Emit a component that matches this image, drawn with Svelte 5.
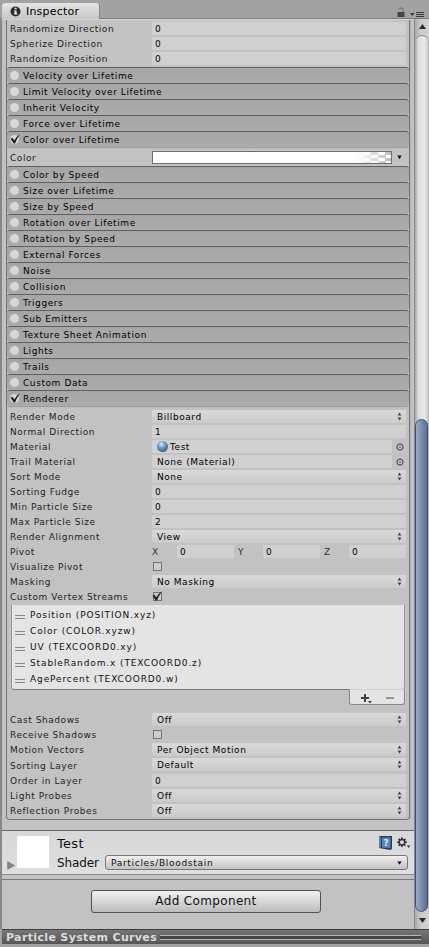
<script>
  const top = ['Randomize Direction', 'Spherize Direction', 'Randomize Position'];
  const modulesA = ['Velocity over Lifetime', 'Limit Velocity over Lifetime', 'Inherit Velocity', 'Force over Lifetime'];
  const modulesB = [
    'Color by Speed', 'Size over Lifetime', 'Size by Speed', 'Rotation over Lifetime', 'Rotation by Speed',
    'External Forces', 'Noise', 'Collision', 'Triggers', 'Sub Emitters', 'Texture Sheet Animation',
    'Lights', 'Trails', 'Custom Data'
  ];
  const renderer = [
    { label: 'Render Mode', kind: 'popup', value: 'Billboard' },
    { label: 'Normal Direction', kind: 'num', value: '1' },
    { label: 'Material', kind: 'object', value: 'Test', ball: true },
    { label: 'Trail Material', kind: 'object', value: 'None (Material)' },
    { label: 'Sort Mode', kind: 'popup', value: 'None' },
    { label: 'Sorting Fudge', kind: 'num', value: '0' },
    { label: 'Min Particle Size', kind: 'num', value: '0' },
    { label: 'Max Particle Size', kind: 'num', value: '2' },
    { label: 'Render Alignment', kind: 'popup', value: 'View' },
    { label: 'Pivot', kind: 'vec', value: ['X', 'Y', 'Z'] },
    { label: 'Visualize Pivot', kind: 'check', value: false },
    { label: 'Masking', kind: 'popup', value: 'No Masking' },
    { label: 'Custom Vertex Streams', kind: 'check', value: true }
  ];
  const streams = [
    'Position (POSITION.xyz)', 'Color (COLOR.xyzw)', 'UV (TEXCOORD0.xy)',
    'StableRandom.x (TEXCOORD0.z)', 'AgePercent (TEXCOORD0.w)'
  ];
  const lighting = [
    { label: 'Cast Shadows', kind: 'popup', value: 'Off' },
    { label: 'Receive Shadows', kind: 'check', value: false },
    { label: 'Motion Vectors', kind: 'popup', value: 'Per Object Motion' },
    { label: 'Sorting Layer', kind: 'popup', value: 'Default', extra: true },
    { label: 'Order in Layer', kind: 'num', value: '0' },
    { label: 'Light Probes', kind: 'popup', value: 'Off' },
    { label: 'Reflection Probes', kind: 'popup', value: 'Off' }
  ];
</script>

{#snippet tick()}
  <svg class="tick" width="12" height="12" viewBox="0 0 12 12"><path d="M.6 5.8 L2.5 4.8 L4.3 7.6 Q6.5 3.5 10.2 1.1 Q7 5.5 5 10.5 L3.8 10.5 Z" fill="#1c1c1c" /></svg>
{/snippet}

{#snippet module(name, on)}
  <div class="module" class:on>
    <span class="dot">{#if on}{@render tick()}{/if}</span>
    <span class="mname">{name}</span>
  </div>
{/snippet}

{#snippet row(r)}
  <div class="row" class:extra={r.extra}>
    <span class="label">{r.label}</span>
    {#if r.kind === 'popup'}
      <div class="field popup">
        <span>{r.value}</span>
        <svg width="5" height="9" viewBox="0 0 5 9"><path d="M2.5 .6 L4.4 3.6 H.6Z M2.5 8.4 L4.4 5.4 H.6Z" fill="#424242" /></svg>
      </div>
    {:else if r.kind === 'num'}
      <div class="field"><span>{r.value}</span></div>
    {:else if r.kind === 'object'}
      <div class="field object">
        {#if r.ball}<i class="ball"></i>{/if}
        <span>{r.value}</span>
      </div>
      <svg class="picker" width="8" height="8" viewBox="0 0 8 8"><circle cx="4" cy="4" r="3.1" fill="none" stroke="#3d3d3d" /><circle cx="4" cy="4" r=".7" fill="#222" /></svg>
    {:else if r.kind === 'vec'}
      <div class="vec">
        {#each r.value as axis}
          <span class="axis">{axis}</span>
          <div class="field"><span>0</span></div>
        {/each}
      </div>
    {:else}
      <span class="box">{#if r.value}{@render tick()}{/if}</span>
    {/if}
  </div>
{/snippet}

<div class="window">
  <header class="tabs">
    <div class="tab">
      <svg width="11" height="11" viewBox="0 0 11 11"><circle cx="5.5" cy="5.5" r="5" fill="#2c2c2c" /><path d="M4.6 1.8h2v1.5h-2z M4 4.4h2.6v3.2h.8v1H3.8v-1h.8V5.4H4z" fill="#eee" /></svg>
      <span>Inspector</span>
    </div>
    <svg class="lock" width="8" height="10" viewBox="0 0 8 10"><path d="M.5 5h7V10h-7z" fill="#444" /><path d="M2 2.4Q2.5 1 4 1Q6 1 6 3.2V5" fill="none" stroke="#666" /></svg>
    <svg class="menu" width="14" height="5" viewBox="0 0 14 5"><path d="M0 1h4.6L2.3 4z M6 0h8v1H6z M6 2h8v1H6z M6 4h8v1H6z" fill="#3b3b3b" /></svg>
  </header>

  <div class="main">
    <div class="content">
      <section class="panel">
        <div class="body first">
          {#each top as t}{@render row({ label: t, kind: 'num', value: '0' })}{/each}
        </div>
        {#each modulesA as m}{@render module(m, false)}{/each}
        {@render module('Color over Lifetime', true)}
        <div class="body color">
          <span class="label">Color</span>
          <div class="gradient"><i></i></div>
          <svg width="5" height="5" viewBox="0 0 5 5"><path d="M.3 .5h4.4L2.5 4.3z" fill="#111" /></svg>
        </div>
        {#each modulesB as m}{@render module(m, false)}{/each}
        {@render module('Renderer', true)}
        <div class="body render">
          {#each renderer as r}{@render row(r)}{/each}
          <div class="list">
            {#each streams as s}
              <div class="item"><i></i><span>{s}</span></div>
            {/each}
          </div>
          <div class="listfoot">
            <svg width="54" height="14" viewBox="0 0 54 14"><path d="M11 7h8v2h-8z M14 4h2v8h-2z M18 11h4l-2 2.4z" fill="#404040" /><path d="M36 7h8v2h-8z" fill="#999" /></svg>
          </div>
          {#each lighting as r}{@render row(r)}{/each}
        </div>
      </section>

      <section class="material">
        <svg class="fold" width="9" height="9" viewBox="0 0 9 9"><path d="M.2 0L8.2 4.5L.2 9z" fill="#858585" /></svg>
        <div class="preview"></div>
        <div class="minfo">
          <div class="mtop">
            <span class="big">Test</span>
            <svg class="help" width="13" height="14" viewBox="0 0 13 14"><path d="M0 .5L2 0H13V13L11 14L0 12z" fill="#213d61" /><path d="M3 1.5H11.5V12L3 11.5z" fill="#5e86b4" /><path d="M1 1v10.7" stroke="#a9bdd3" /><text x="7.3" y="9.8" text-anchor="middle" font-size="8" font-weight="bold" fill="#e8f0fa">?</text></svg>
            <svg class="gear" width="14" height="12" viewBox="0 0 14 12"><g stroke="#333" fill="none"><circle cx="5" cy="5.2" r="2.8" stroke-width="1.5" /><path stroke-width="1.7" d="M5 .4v2M5 8v2M.2 5.2h2M7.8 5.2h2M1.6 1.8l1.4 1.4M7 7.2l1.4 1.4M1.6 8.6l1.4-1.4M7 3.2l1.4-1.4" /></g><path d="M9.8 8.5h3.6L11.6 11z" fill="#333" /></svg>
          </div>
          <div class="mbot">
            <span class="shader">Shader</span>
            <div class="select"><span>Particles/Bloodstain</span><svg width="5" height="4" viewBox="0 0 5 4"><path d="M.3 .4h4.4L2.5 3.8z" fill="#111" /></svg></div>
          </div>
        </div>
      </section>
      <div class="adder"><button>Add Component</button></div>
    </div>

    <aside class="scroll">
      <svg width="7" height="5" viewBox="0 0 7 5"><path d="M0 5h7L3.5 0z" fill="#2c2c2c" /></svg>
      <div class="track"><div class="thumb"></div></div>
      <svg class="down" width="7" height="5" viewBox="0 0 7 5"><path d="M0 0h7L3.5 5z" fill="#2c2c2c" /></svg>
    </aside>
  </div>

  <footer class="curves"><span>Particle System Curves</span><i></i></footer>
</div>

<style>
  * { box-sizing: border-box; }
  .window { width: 429px; height: 947px; display: flex; flex-direction: column; background: #a2a2a2; font-family: "DejaVu Sans", sans-serif; font-size: 9px; letter-spacing: .56px; color: #000; overflow: hidden; white-space: nowrap; }
  .tabs { height: 19px; flex: none; display: flex; align-items: flex-end; border-bottom: 1px solid #7d7d7d; padding-left: 2px; background: #a2a2a2; }
  .tab { height: 16px; width: 98px; margin-bottom: -1px; display: flex; align-items: center; padding-left: 8px; gap: 5px; font-size: 11px; letter-spacing: .2px; background: linear-gradient(#e4e4e4, #c6c6c6); border-radius: 3px 3px 0 0; border-right: 1px solid #848484; }
  .lock { margin: 0 0 1px auto; }
  .menu { margin: 0 5px 1px 5px; }
  .main { height: 910px; flex: none; display: flex; padding-left: 2px; background: #c2c2c2; box-shadow: inset 2px 0 #888; }
  .content { width: 412px; border-top: 1px solid #d4d4d4; }
  .panel { width: 404px; margin-left: 4px; height: 800px; border: 1px solid #747474; border-top: 0; border-radius: 0 0 4px 4px; box-shadow: 1px 0 #b3b3b3; }
  .body { padding-left: 3px; }
  .first { height: 47px; padding-top: 1px; }
  .row { height: 15px; display: flex; align-items: center; padding-right: 3px; }
  .label { width: 142px; flex: none; color: #222; line-height: 14px; padding-top: 1px; }
  .field { flex: 1; height: 13px; background: #d0d0d0; display: flex; align-items: center; padding-left: 3px; border-radius: 1px; }
  .field span { line-height: 12px; padding-top: 1px; }
  .popup { background: linear-gradient(#d9d9d9, #cbcbcb); padding: 0 4px 0 5px; justify-content: space-between; }
  .object { padding-left: 5px; }
  .ball { width: 11px; height: 11px; border-radius: 50%; margin-right: 2px; background: radial-gradient(circle at 40% 30%, #dceaf5 0, #7fa6c9 30%, #426f9b 65%, #2c537b 100%); }
  .picker { margin: 0 2px 0 4px; }
  .vec { flex: 1; display: flex; align-items: center; }
  .axis { width: 25px; color: #333; line-height: 12px; padding-top: 1px; }
  .vec .field { flex: none; width: 57px; margin-right: 4px; }
  .vec .field:last-child { margin-right: 0; }
  .box { width: 9px; height: 9px; margin-left: 1px; border: 1px solid #747474; background: #cbcbcb; position: relative; }
  .box .tick { position: absolute; left: -2px; top: -3px; }
  .module { height: 16px; border-top: 1px solid #5f5f5f; background: linear-gradient(#a6a6a6, #ababab); border-radius: 3px; display: flex; align-items: center; padding-left: 3px; letter-spacing: .58px; }
  .module.on { box-shadow: 0 1px 1px #999; }
  .dot { width: 9px; height: 9px; border-radius: 50%; background: #d8d8d8; position: relative; margin-right: 4px; }
  .dot .tick { position: absolute; left: 0; top: -2px; }
  .mname { line-height: 14px; padding-top: 1px; }
  .color { height: 19px; display: flex; align-items: center; padding-top: 1px; }
  .gradient { width: 240px; height: 13px; border: 1px solid #6c6c6c; padding: 0; background: repeating-conic-gradient(#b8b8b8 0 25%, #fff 0 50%) 0 0 / 15px 6px; margin-right: 5px; }
  .gradient i { display: block; height: 11px; background: linear-gradient(90deg, #fff 86%, rgba(255,255,255,.05) 100%); }
  .render { padding-top: 3px; }
  .list { height: 85px; width: 394px; margin: 1px 0 0 1px; background: #e4e4e4; border: solid #999; border-width: 0 1px 1px; border-bottom-color: #777; border-radius: 0 0 3px 3px; padding-top: 2px; }
  .item { height: 16px; display: flex; align-items: center; color: #111; padding-left: 3px; letter-spacing: .88px; }
  .item i { width: 10px; height: 4px; border: solid #888; border-width: 1px 0; margin: 4px 5px 0 0; }
  .listfoot { width: 56px; height: 16px; margin: -1px 0 7px 339px; background: #e4e4e4; border: 1px solid #888; border-top-color: #d0d0d0; border-radius: 0 0 3px 3px; }
  .listfoot svg { display: block; }
  .row.extra { height: 16px; align-items: flex-start; padding-top: 1px; }
  .extra .label { padding-top: 1px; }
  .material { height: 45px; margin-top: 10px; display: flex; background: linear-gradient(#d7d7d7, #dfdfdf); border-top: 1px solid #666; border-bottom: 1px solid #8b8b8b; padding: 5px 6px 0 5px; }
  .fold { margin-top: 25px; }
  .preview { width: 32px; height: 32px; background: #fff; margin-left: 1px; flex: none; }
  .minfo { flex: 1; padding-left: 8px; color: #111; }
  .mtop { display: flex; height: 19px; align-items: flex-start; }
  .big { font-size: 13px; letter-spacing: .3px; line-height: 16px; }
  .help { margin-left: auto; }
  .gear { margin: 1px -3px 0 5px; }
  .mbot { display: flex; align-items: center; height: 15px; }
  .shader { width: 48px; font-size: 12px; letter-spacing: -.1px; }
  .select { flex: 1; height: 15px; border: 1px solid #777; border-radius: 3px; background: linear-gradient(#efefef, #c2c2c2); display: flex; align-items: center; justify-content: space-between; padding: 0 5px; letter-spacing: .7px; }
  .adder { margin-top: 4px; border-top: 1px solid #777; padding: 10px 0 0 89px; }
  button { display: block; width: 230px; height: 23px; border: 1px solid #505050; border-radius: 3px; background: linear-gradient(#f2f2f2, #bbb); font: 12px "DejaVu Sans", sans-serif; letter-spacing: .35px; color: #111; padding: 0 0 2px; }
  .scroll { width: 15px; display: flex; flex-direction: column; align-items: center; border-left: 1px solid #888; background: linear-gradient(90deg, #ababab, #cacaca 40%, #d2d2d2); padding-top: 5px; }
  .track { width: 14px; height: 877px; margin-top: 6px; border-radius: 7px; background: linear-gradient(90deg, #a8a8a8, #dedede 25%, #ebebeb 65%, #d0d0d0 90%, #aaa); border-top: 1px solid #888; padding-top: 383px; }
  .thumb { width: 13px; height: 493px; border: 1px solid #3b5076; border-radius: 7px; background: linear-gradient(90deg, #9baac2, #8193b1 40%, #60759a 90%); }
  .down { margin-top: 6px; }
  .curves { height: 15px; flex: none; margin-left: 2px; background: linear-gradient(#767676, #555); border-top: 1px solid #3f3f3f; display: flex; align-items: center; padding: 1px 8px 0 4px; color: #dcdcdc; font-weight: bold; font-size: 11px; letter-spacing: .35px; }
  .curves i { flex: 1; height: 5px; margin-left: 3px; border: solid #b5b5b5; border-width: 1px 0; background: #444; }
</style>
